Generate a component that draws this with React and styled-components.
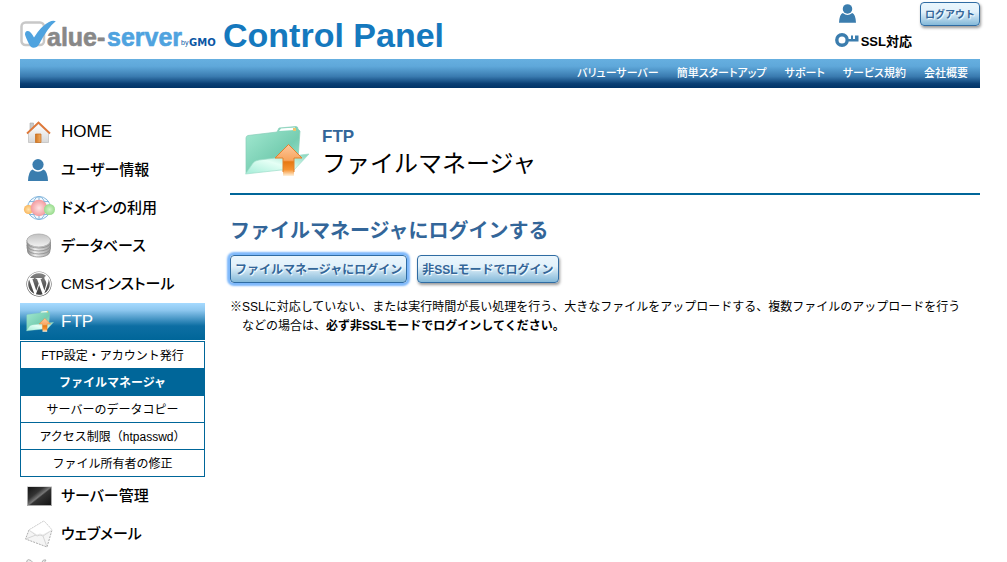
import React from "react";
import styled, { createGlobalStyle } from "styled-components";
import { FaWordpress } from "react-icons/fa";

const GlobalStyle = createGlobalStyle`
  * {
    box-sizing: border-box;
  }
  body {
    margin: 0;
    background: #fff;
    color: #000;
    font-family: "Liberation Sans", "Noto Sans CJK JP", sans-serif;
    font-size: 12px;
  }
  ul {
    margin: 0;
    padding: 0;
    list-style: none;
  }
  a {
    color: inherit;
    text-decoration: none;
  }
`;

const Page = styled.div`
  height: 100vh;
  overflow: hidden;
  padding: 0 27px 0 20px;
`;

const Header = styled.header`
  display: flex;
  justify-content: space-between;
  height: 59px;
`;

const Brand = styled.a`
  display: flex;
  align-items: center;
  gap: 6px;
  padding-top: 10px;
`;

const BrandTitle = styled.span`
  color: #1579be;
  font-size: 34px;
  font-weight: bold;
  line-height: 40px;
`;

const Account = styled.div`
  display: flex;
  align-items: flex-start;
  gap: 8px;
  padding-top: 2px;
`;

const AccountInfo = styled.div`
  display: flex;
  flex-direction: column;
  gap: 9px;
  padding-top: 2px;
`;

const AccountRow = styled.div`
  display: flex;
  align-items: center;
  gap: 2px;
  height: 18px;
  padding-left: ${(props) => props.$indent || `0px`};

  font-size: 13px;
  font-weight: bold;
`;

const GlossButton = styled.button`
  height: ${(props) => props.$height || `28px`};
  padding: 0 4px 2px;
  border: 1px solid #2f6ca3;
  border-radius: 4px;
  background: linear-gradient(#eaf6fd 0%, #e2f1fa 40%, #84b9d9 100%);
  box-shadow: ${(props) =>
    props.$focused
      ? `0 0 2px 3px #7db8fb`
      : `1px 2px 3px rgba(0, 0, 0, 0.4)`};

  color: #369;
  font-family: inherit;
  font-size: ${(props) => props.$size || `12px`};
  font-weight: bold;
  white-space: nowrap;
  text-shadow: 1px 1px 1px #fff;
  cursor: pointer;
`;

const GlobalNav = styled.nav`
  display: flex;
  align-items: center;
  justify-content: flex-end;
  gap: 18px;
  height: 29px;
  padding: 0 12px 3px 0;
  background: linear-gradient(#66afe0 0%, #5fa8da 25%, #3a7bb0 60%, #0a3f74 85%, #003366 100%);

  color: #fff;
  font-size: 11px;
  font-weight: 500;
  font-feature-settings: "palt";
`;

const Body = styled.div`
  display: flex;
  align-items: flex-start;
  gap: 25px;
  padding-top: 25px;
`;

const Sidebar = styled.nav`
  flex: 0 0 185px;
`;

const MenuLink = styled.a`
  display: flex;
  align-items: center;
  gap: 5px;
  height: 38px;
  padding-left: 3px;
  border-bottom: 1px solid #fff;
  background: ${(props) =>
    props.$active
      ? `linear-gradient(#a6daff 0%, #8cc6ee 20%, #0d6ea3 62%, #006699 100%)`
      : `none`};

  color: ${(props) => (props.$active ? `#fff` : `#000`)};
  font-size: ${(props) => (props.$latin ? `17px` : `15px`)};
  font-weight: 500;
  line-height: 20px;
  font-feature-settings: "palt";

  & svg {
    flex: none;
  }
`;

const SubMenu = styled.ul`
  border: 1px solid #006699;
`;

const SubItem = styled.li`
  & + & {
    border-top: 1px solid #006699;
  }
`;

const SubLink = styled.a`
  display: block;
  height: 26px;
  background: ${(props) => (props.$active ? `#006699` : `#fff`)};

  color: ${(props) => (props.$active ? `#fff` : `#000`)};
  font-weight: ${(props) => (props.$active ? `bold` : `normal`)};
  line-height: 28px;
  text-align: center;
`;

const Main = styled.main`
  flex: 1;
  min-width: 0;
`;

const PageHeading = styled.div`
  display: flex;
  align-items: center;
  gap: 12px;
  height: 82px;
  padding: 0 0 2px 12px;
  border-bottom: 2px solid #006699;
`;

const HeadingText = styled.div`
  padding-top: 4px;
`;

const Category = styled.p`
  margin: 0;
  color: #369;
  font-size: 17px;
  font-weight: bold;
  line-height: 20px;
`;

const PageTitle = styled.h1`
  margin: 0;
  font-size: 24px;
  font-weight: normal;
  line-height: 34px;
`;

const SectionTitle = styled.h2`
  margin: 21px 0 9px;
  color: #369;
  font-size: 20px;
  font-weight: bold;
  line-height: 30px;
`;

const ButtonRow = styled.div`
  display: flex;
  gap: 10px;
`;

const Note = styled.p`
  margin: 15px 0 0;
  padding-left: 12px;
  line-height: 19px;
  text-indent: -12px;
`;

const LogoMark = () => (
  <svg width="197" height="34" viewBox="0 0 197 34" role="img" aria-label="Value-server by GMO">
    <rect x="1.500" y="4.500" width="22.500" height="22.500" rx="4" fill="#fff" stroke="#c8c8c8" strokeWidth="2.500" />
    <path
      d="M5 16.500Q5 12 9 13.200Q11 14 14 19.500Q21 8 29 4Q33 1.800 35.800 3.200Q28 9 19 26.500Q17 29.700 13.500 29.700Q10.500 29.500 9 26Q5.500 19 5 16.500Z"
      fill="#4fa3df"
    />
    <g fontFamily="Liberation Sans, sans-serif" fontWeight="bold">
      <text x="27" y="28" fontSize="25" fill="#888" stroke="#888" strokeWidth=".6" strokeLinejoin="round">
        alue-
      </text>
      <text x="87" y="28" fontSize="25" fill="#4fa3df" stroke="#4fa3df" strokeWidth=".6" strokeLinejoin="round">
        server
      </text>
      <text x="161" y="27" fontSize="7" fill="#0b57a4" fontWeight="normal">
        by
      </text>
      <text x="169" y="28" fontSize="10" fill="#0b57a4" fontFamily="DejaVu Sans, sans-serif">
        GMO
      </text>
    </g>
  </svg>
);

const UserIcon = ({ width, height, box }) => (
  <svg width={width} height={height} viewBox={box || "0 0 20 22"}>
    <circle cx="10" cy="5.600" r="5.600" fill="#3b7dae" />
    <path d="M0 22Q.5 12 4.500 10.500Q10 15 15.500 10.500Q19.500 12 20 22Z" fill="#3b7dae" />
  </svg>
);

const KeyIcon = () => (
  <svg width="24" height="16" viewBox="0 0 24 16">
    <circle cx="7" cy="8" r="5.200" fill="none" stroke="#3b7dae" strokeWidth="3.400" />
    <path d="M13 7h3V3.500h2V7h2V3.500h3.500v6H13z" fill="#3b7dae" />
  </svg>
);

const HomeIcon = () => (
  <svg width="33" height="32" viewBox="0 0 33 32">
    <defs>
      <linearGradient id="wall" x1="0" y1="0" x2="0" y2="1">
        <stop offset="0" stopColor="#fff" />
        <stop offset="1" stopColor="#d8d8d8" />
      </linearGradient>
      <linearGradient id="door" x1="0" y1="0" x2="1" y2="0">
        <stop offset="0" stopColor="#d17620" />
        <stop offset="1" stopColor="#f2ae65" />
      </linearGradient>
    </defs>
    <path d="M7 7h3.500v8H7z" fill="#c9c9c9" stroke="#aaa" strokeWidth=".6" />
    <path d="M5.500 16.500L15.500 8L25.500 17V26.500H5.500Z" fill="url(#wall)" stroke="#bbb" strokeWidth=".7" />
    <path d="M12.500 18h5.500v8.500h-5.500z" fill="url(#door)" stroke="#c66b1b" strokeWidth=".7" />
    <path d="M4 17.500L15.500 6.500L27 17.500" fill="none" stroke="#df7838" strokeWidth="1.800" />
  </svg>
);

const UserMenuIcon = () => <UserIcon width="33" height="22" box="-5 0 33 22" />;

const DomainIcon = () => (
  <svg width="33" height="32" viewBox="0 0 33 32">
    <defs>
      <radialGradient id="redBall">
        <stop offset="0" stopColor="#ffe4e4" />
        <stop offset="1" stopColor="#f39a9e" />
      </radialGradient>
      <radialGradient id="greenBall">
        <stop offset="0" stopColor="#d3f5c9" />
        <stop offset="1" stopColor="#98db8d" />
      </radialGradient>
      <radialGradient id="orangeBall">
        <stop offset="0" stopColor="#ffe4b0" />
        <stop offset="1" stopColor="#f9b65c" />
      </radialGradient>
    </defs>
    <g fill="none" stroke="#85b7dd" strokeWidth="1">
      <circle cx="16" cy="16" r="11.500" fill="#f3f9fe" />
      <ellipse cx="16" cy="16" rx="6.500" ry="11.500" />
      <path d="M16 4.500v23M6 9.500h20M4.500 16h23M6 22.500h20" />
    </g>
    <circle cx="5.500" cy="17.500" r="4.600" fill="url(#orangeBall)" />
    <circle cx="16" cy="16" r="8.300" fill="url(#redBall)" />
    <circle cx="26.500" cy="17.500" r="5.500" fill="url(#greenBall)" />
  </svg>
);

const DatabaseIcon = () => (
  <svg width="33" height="32" viewBox="0 0 33 32">
    <defs>
      <linearGradient id="disk">
        <stop offset="0" stopColor="#8d8d8d" />
        <stop offset=".35" stopColor="#f2f2f2" />
        <stop offset="1" stopColor="#a0a0a0" />
      </linearGradient>
      <linearGradient id="diskTop" x1="0" y1="0" x2="0" y2="1">
        <stop offset="0" stopColor="#c2c2c2" />
        <stop offset="1" stopColor="#f3f3f3" />
      </linearGradient>
    </defs>
    <g fill="url(#disk)" stroke="#8a8a8a" strokeWidth=".8">
      <path d="M4.500 18v3c0 8 22.500 8 22.500 0v-3z" />
      <path d="M4 15v3c0 8 23.500 8 23.500 0v-3z" />
      <path d="M4 12v3c0 8 23.500 8 23.500 0v-3z" />
      <path d="M4 10v2c0 8 23.500 8 23.500 0v-2z" />
      <ellipse cx="15.700" cy="10.500" rx="11.800" ry="6.500" fill="url(#diskTop)" stroke="#aaa" />
    </g>
  </svg>
);

const CmsIcon = () => (
  <svg width="33" height="32" viewBox="0 0 33 32">
    <defs>
      <linearGradient id="cms" x1="0" y1="0" x2="0" y2="1" gradientUnits="objectBoundingBox">
        <stop offset="0" stopColor="#8a8a8a" />
        <stop offset="1" stopColor="#333" />
      </linearGradient>
    </defs>
    <FaWordpress x="3" y="3" size={26} fill="url(#cms)" />
  </svg>
);

const FolderIcon = ({ id, width, height }) => (
  <svg width={width} height={height} viewBox="0 0 68 54">
    <defs>
      <linearGradient id={`${id}Back`} x1="0" y1="0" x2="1" y2="1">
        <stop offset="0" stopColor="#a4ead2" />
        <stop offset=".6" stopColor="#76cdb1" />
        <stop offset="1" stopColor="#a9ead6" />
      </linearGradient>
      <linearGradient id={`${id}Front`} x1="0" y1="1" x2="1" y2="0">
        <stop offset="0" stopColor="#a2ecd7" />
        <stop offset=".5" stopColor="#e5fff5" />
        <stop offset="1" stopColor="#82d4bc" />
      </linearGradient>
      <linearGradient id={`${id}Arrow`} x1="0" y1="0" x2="0" y2="1">
        <stop offset="0" stopColor="#fdc89d" />
        <stop offset=".5" stopColor="#f8a55e" />
        <stop offset=".55" stopColor="#e67812" />
        <stop offset=".8" stopColor="#f69331" />
        <stop offset="1" stopColor="#fff3df" />
      </linearGradient>
    </defs>
    <path
      d="M4 13Q4 11 6 10.500L35 7L37 3L54 1.500Q56 1.500 56 4L58 6L56 34L4 48Z"
      fill={`url(#${id}Back)`}
      stroke="#86cdb8"
      strokeWidth=".7"
    />
    <path d="M37 6L39 3.500L53 2.500V5Z" fill="#fff" />
    <path d="M51 3h3v3h-3z" fill="#edc76d" />
    <path d="M3.500 49L11 38Q13 35.500 17 35L67 29L51 46L39 45Z" fill={`url(#${id}Front)`} stroke="#9dddc9" strokeWidth=".7" />
    <path d="M46.500 19.500L60 33H52V51H41V33H33Z" fill={`url(#${id}Arrow)`} />
    <path d="M41 47V33H33L46.500 19.500L60 33H52V47" fill="none" stroke="#e1822e" strokeWidth="1" />
  </svg>
);

const FtpMenuIcon = () => <FolderIcon id="menuFolder" width="33" height="23" />;

const ServerIcon = () => (
  <svg width="33" height="32" viewBox="0 0 33 32">
    <defs>
      <linearGradient id="screen" x1="0" y1="0" x2="1" y2="1">
        <stop offset="0" stopColor="#111" />
        <stop offset=".35" stopColor="#333" />
        <stop offset=".5" stopColor="#777" />
        <stop offset=".55" stopColor="#333" />
        <stop offset="1" stopColor="#111" />
      </linearGradient>
    </defs>
    <rect x="4.500" y="6.500" width="24" height="19" fill="url(#screen)" stroke="#aaa" />
    <path d="M4 6.500h25" stroke="#ddd" />
  </svg>
);

const MailIcon = () => (
  <svg width="33" height="32" viewBox="0 0 33 32">
    <path d="M6 12L21 3L29 12L24 29L2.500 21Z" fill="#f5f5f5" stroke="#999" strokeWidth=".8" strokeDasharray="2 1" />
    <path d="M6 12L14 18Q17 16 20 18L29 12M2.500 21L13 17M24 29L20 18" fill="none" stroke="#d5d5d5" />
    <path d="M6 12L21 3L29 12L20 17Q17 15 14 17Z" fill="#fff" stroke="#ddd" strokeWidth=".6" />
  </svg>
);

const ToolIcon = () => (
  <svg width="33" height="32" viewBox="0 0 33 32">
    <path
      d="M5 7L3.500 5Q5 2.500 8 4.500L14 11L19 6Q20 3 23 4L21 7L24 8Q23 11 19 10L9 25"
      fill="#eee"
      stroke="#aaa"
      strokeWidth=".9"
    />
  </svg>
);

const navItems = ["バリューサーバー", "簡単スタートアップ", "サポート", "サービス規約", "会社概要"];

const subItems = [
  "FTP設定・アカウント発行",
  "ファイルマネージャ",
  "サーバーのデータコピー",
  "アクセス制限（htpasswd）",
  "ファイル所有者の修正",
];

const menuItems = [
  { label: "HOME", icon: HomeIcon, latin: true },
  { label: "ユーザー情報", icon: UserMenuIcon },
  { label: "ドメインの利用", icon: DomainIcon },
  { label: "データベース", icon: DatabaseIcon },
  { label: "CMSインストール", icon: CmsIcon },
  { label: "FTP", icon: FtpMenuIcon, latin: true, children: subItems },
  { label: "サーバー管理", icon: ServerIcon },
  { label: "ウェブメール", icon: MailIcon },
  { label: "", icon: ToolIcon },
];

const App = () => {
  return (
    <>
      <GlobalStyle />
      <Page>
        <Header>
          <Brand href="#">
            <LogoMark />
            <BrandTitle>Control Panel</BrandTitle>
          </Brand>
          <Account>
            <AccountInfo>
              <AccountRow $indent={`4px`}>
                <UserIcon width="17" height="19" />
              </AccountRow>
              <AccountRow>
                <KeyIcon />
                SSL対応
              </AccountRow>
            </AccountInfo>
            <GlossButton type="button" $height={`24px`} $size={`10px`}>
              ログアウト
            </GlossButton>
          </Account>
        </Header>
        <GlobalNav>
          {navItems.map((data) => (
            <a href="#" key={data}>
              {data}
            </a>
          ))}
        </GlobalNav>
        <Body>
          <Sidebar>
            <ul>
              {menuItems.map((data, idx) => {
                const Icon = data.icon;
                return (
                  <li key={idx}>
                    <MenuLink href="#" $latin={data.latin} $active={data.children}>
                      <Icon />
                      {data.label}
                    </MenuLink>
                    {data.children && (
                      <SubMenu>
                        {data.children.map((sub) => (
                          <SubItem key={sub}>
                            <SubLink href="#" $active={sub === "ファイルマネージャ"}>
                              {sub}
                            </SubLink>
                          </SubItem>
                        ))}
                      </SubMenu>
                    )}
                  </li>
                );
              })}
            </ul>
          </Sidebar>
          <Main>
            <PageHeading>
              <FolderIcon id="headFolder" width="68" height="54" />
              <HeadingText>
                <Category>FTP</Category>
                <PageTitle>ファイルマネージャ</PageTitle>
              </HeadingText>
            </PageHeading>
            <SectionTitle>ファイルマネージャにログインする</SectionTitle>
            <ButtonRow>
              <GlossButton type="button" $focused>
                ファイルマネージャにログイン
              </GlossButton>
              <GlossButton type="button">非SSLモードでログイン</GlossButton>
            </ButtonRow>
            <Note>
              ※SSLに対応していない、または実行時間が長い処理を行う、大きなファイルをアップロードする、複数ファイルのアップロードを行う
              <br />
              <span>などの場合は、</span>
              <b>必ず非SSLモードでログインしてください。</b>
            </Note>
          </Main>
        </Body>
      </Page>
    </>
  );
};

export default App;
